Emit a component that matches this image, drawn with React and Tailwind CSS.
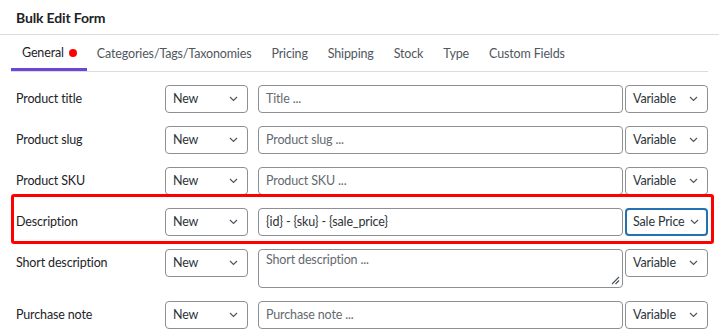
import React from "react";

const tabs = ["General", "Categories/Tags/Taxonomies", "Pricing", "Shipping", "Stock", "Type", "Custom Fields"];

const rows = [
  { label: "Product title", placeholder: "Title ..." },
  { label: "Product slug", placeholder: "Product slug ..." },
  { label: "Product SKU", placeholder: "Product SKU ..." },
  { label: "Description", value: "{id} - {sku} - {sale_price}", variable: "Sale Price", focus: true, marked: true },
  { label: "Short description", placeholder: "Short description ...", textarea: true },
  { label: "Purchase note", placeholder: "Purchase note ..." },
];

function Chevron() {
  return (
    <svg width="9" height="6" viewBox="0 0 9 6" fill="none" className="shrink-0">
      <path d="M1 1l3.5 3.5L8 1" stroke="#50575e" strokeWidth="1.2" />
    </svg>
  );
}

function Select({ value, focus }) {
  return (
    <div
      className={`flex items-center justify-between h-[28px] w-[83px] shrink-0 rounded-[4px] bg-white whitespace-nowrap text-[#2c3338] ${
        focus ? "border-2 border-[#2271b1] pl-[6px] pr-[7px]" : "border border-[#8c8f94] pl-[7px] pr-[9px]"
      }`}
    >
      <span>{value}</span>
      <Chevron />
    </div>
  );
}

function Row({ row }) {
  return (
    <div className="relative flex items-start pl-[16px] pr-[11px] mb-[13px]">
      {row.marked && (
        <div className="absolute left-[11px] right-[5px] top-[-14px] bottom-[-8px] border-[3px] border-[#ff0000] rounded-[3px] pointer-events-none" />
      )}
      <div className="w-[149px] shrink-0 h-[28px] flex items-center text-[#1d2327]">{row.label}</div>
      <Select value="New" />
      <div className="ml-[10px] mr-[2px] flex-1">
        {row.textarea ? (
          <div className="relative h-[39px] rounded-[4px] border border-[#8c8f94] bg-white px-[7px] pt-[1px] text-[#646970]">
            {row.placeholder}
            <svg width="9" height="9" viewBox="0 0 9 9" className="absolute right-[2px] bottom-[2px]">
              <path d="M8 1L1 8M8 4.5L4.5 8" stroke="#50575e" strokeWidth="1.2" />
            </svg>
          </div>
        ) : (
          <div className="h-[28px] flex items-center rounded-[4px] border border-[#8c8f94] bg-white px-[7px]">
            {row.value ? (
              <span className="text-[#2c3338]">{row.value}</span>
            ) : (
              <span className="text-[#646970]">{row.placeholder}</span>
            )}
          </div>
        )}
      </div>
      <Select value={row.variable || "Variable"} focus={row.focus} />
    </div>
  );
}

export default function App() {
  return (
    <div
      className="w-[719px] h-[335px] overflow-hidden bg-white text-[12.5px] tracking-[-0.15px]"
      style={{ fontFamily: 'Lato, "Liberation Sans", sans-serif' }}
    >
      <div className="h-[35px] flex items-center pl-[16px] border-b border-[#dcdcde] text-[14px] font-bold text-[#1d2327]">
        Bulk Edit Form
      </div>
      <div className="mx-[11px] flex border-b border-[#dcdcde] h-[37px] mb-[13px]">
        {tabs.map((t, i) => (
          <div
            key={t}
            className={`flex items-center gap-[5px] px-[10px] h-full pt-[3px] ${
              i === 0 ? "pl-[11px] border-b-[3px] border-[#6b47d6] text-[#1d2327] -mb-[1px]" : "text-[#50575e]"
            }`}
          >
            {t}
            {i === 0 && <span className="w-[8px] h-[8px] rounded-full bg-[#ff0000]" />}
          </div>
        ))}
      </div>
      {rows.map((r) => (
        <Row key={r.label} row={r} />
      ))}
    </div>
  );
}
